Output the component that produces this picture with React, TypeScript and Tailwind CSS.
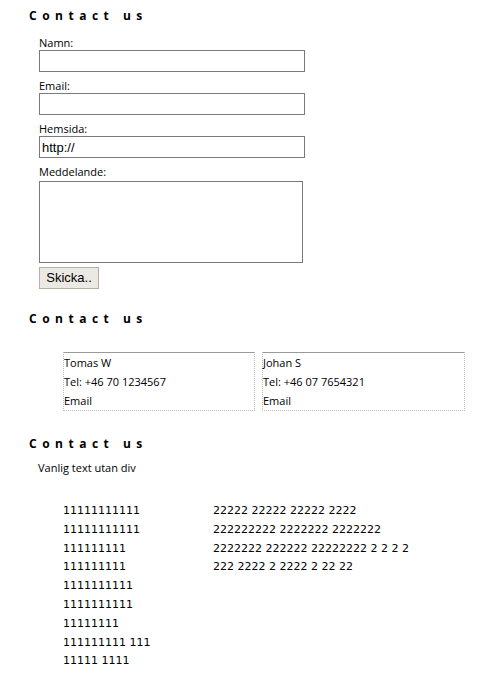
const heading = "font-['Open_Sans',sans-serif] text-[12px] leading-[16px] font-bold tracking-[5.5px] text-black";

const Field = ({ label, value }: { label: string; value?: string }) => {
  return (
    <div>
      <div className="leading-[15px]">{label}</div>
      <input
        type="text"
        defaultValue={value}
        className="block h-[22px] w-[266px] border border-[#7a7a7a] bg-white px-[2px] font-['Liberation_Sans',Arial,sans-serif] text-[13px] text-black outline-none"
      />
    </div>
  );
};

const Card = ({ name, tel, width }: { name: string; tel: string; width: string }) => {
  return (
    <div className={`${width} border border-dotted border-[#bdbdbd]`}>
      <div className="-mt-px border-t border-[#9a9a9a] leading-[19px]">
        <div>{name}</div>
        <div>{tel}</div>
        <div>Email</div>
      </div>
    </div>
  );
};

const ones = ["11111111111", "11111111111", "111111111", "111111111", "1111111111", "1111111111", "11111111", "111111111 111", "11111 1111"];
const twos = ["22222 22222 22222 2222", "222222222 2222222 2222222", "2222222 222222 22222222 2 2 2 2", "222 2222 2 2222 2 22 22"];

export default function App() {
  return (
    <div className="min-h-[687px] w-[481px] bg-white pt-2 pl-[29px] font-['Open_Sans',sans-serif] text-[11px] text-black">
      {/* form */}
      <h2 className={heading}>Contact us</h2>
      <div className="ml-[10px] mt-[11px]">
        <div className="flex flex-col gap-[6px]">
          <Field label="Namn:" />
          <Field label="Email:" />
          <Field label="Hemsida:" value="http://" />
          <div>
            <div className="leading-[15px]">Meddelande:</div>
            <textarea className="mt-[2px] block h-[82px] w-[264px] resize-none border border-[#7a7a7a] bg-white outline-none" />
          </div>
        </div>
        <button className="mt-[4px] h-[22px] w-[60px] border border-[#b5b2a5] bg-[#ebe9e3] font-['Liberation_Sans',Arial,sans-serif] text-[13px] leading-[20px] text-black">
          Skicka..
        </button>
      </div>

      {/* cards */}
      <h2 className={`${heading} mt-[22px]`}>Contact us</h2>
      <div className="ml-[34px] mt-[25px] flex gap-[7px]">
        <Card name="Tomas W" tel="Tel: +46 70 1234567" width="w-[192px]" />
        <Card name="Johan S" tel="Tel: +46 07 7654321" width="w-[203px]" />
      </div>

      {/* plain text */}
      <h2 className={`${heading} mt-[25px]`}>Contact us</h2>
      <p className="ml-[9px] mt-[8px] leading-[15px]">Vanlig text utan div</p>
      <div className="ml-[34px] mt-[27px] grid grid-cols-[150px_1fr] font-['DejaVu_Sans',Verdana,sans-serif] text-[11px] leading-[18.8px]">
        <div>
          {ones.map((t, i) => (
            <div key={i}>{t}</div>
          ))}
        </div>
        <div>
          {twos.map((t, i) => (
            <div key={i}>{t}</div>
          ))}
        </div>
      </div>
    </div>
  );
}
